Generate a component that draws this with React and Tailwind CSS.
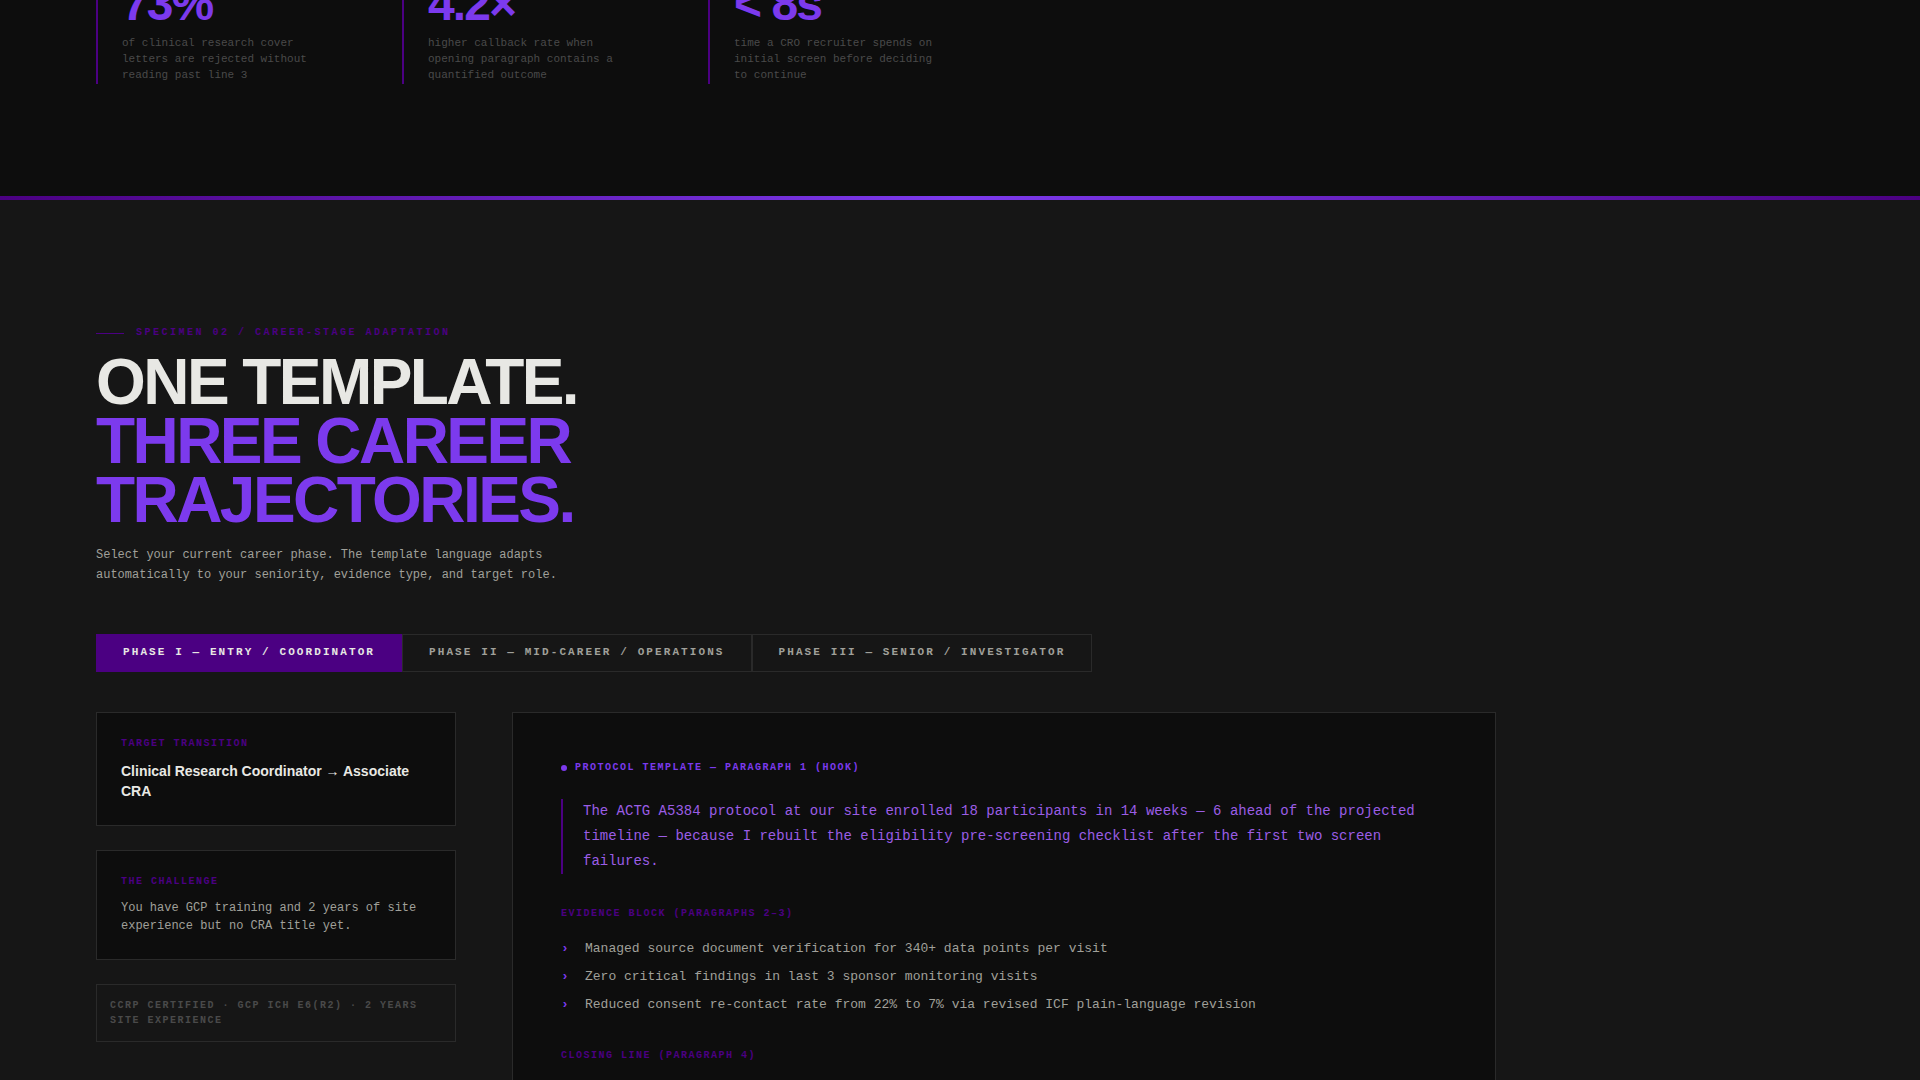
import { useState } from "react";

const stats = [
  { value: "73%", label: "of clinical research cover letters are rejected without reading past line 3" },
  { value: "4.2×", label: "higher callback rate when opening paragraph contains a quantified outcome" },
  { value: "< 8s", label: "time a CRO recruiter spends on initial screen before deciding to continue" },
];

const phases = [
  "PHASE I — ENTRY / COORDINATOR",
  "PHASE II — MID-CAREER / OPERATIONS",
  "PHASE III — SENIOR / INVESTIGATOR",
];

const evidence = [
  "Managed source document verification for 340+ data points per visit",
  "Zero critical findings in last 3 sponsor monitoring visits",
  "Reduced consent re-contact rate from 22% to 7% via revised ICF plain-language revision",
];

function Label({ as: Tag = "h3", className = "", children }) {
  return (
    <Tag className={`text-[10px] leading-[14px] font-bold tracking-[0.15em] ${className}`}>
      {children}
    </Tag>
  );
}

function Stats() {
  return (
    <section className="-mt-5 bg-[#0d0d0d] px-[5%] pb-28">
      <dl className="grid max-w-[854px] grid-cols-3 gap-16">
        {stats.map((s) => (
          <div key={s.value} className="flex flex-col-reverse justify-end border-l-2 border-[#4b0082] pb-px pl-6">
            <dt className="text-[11px] leading-4 text-[#4a4a4a]">{s.label}</dt>
            <dd className="mb-[7px] font-['Liberation_Sans',sans-serif] text-5xl leading-none font-bold tracking-[-0.04em] text-[#7c3aed]">
              {s.value}
            </dd>
          </div>
        ))}
      </dl>
    </section>
  );
}

function PhaseTabs({ active, onSelect }) {
  return (
    <div role="tablist" className="mt-[49px] flex">
      {phases.map((name, i) => (
        <button
          key={name}
          type="button"
          role="tab"
          aria-selected={i === active}
          onClick={() => onSelect(i)}
          className={`border px-[26px] pt-[9px] pb-[11px] text-[11px] leading-4 font-bold tracking-[0.19em] whitespace-nowrap ${
            i === active
              ? "border-[#4b0082] bg-[#4b0082] text-[#e8e8e4]"
              : "border-[#2a2a2a] bg-transparent text-[#a0a09a]"
          }`}
        >
          {name}
        </button>
      ))}
    </div>
  );
}

function Sidebar() {
  return (
    <aside className="flex flex-col gap-6">
      <div className="border border-[#2a2a2a] bg-[#0d0d0d] p-6">
        <Label className="mb-[10px] text-[#4b0082]">TARGET TRANSITION</Label>
        <p className="font-['Liberation_Sans',sans-serif] text-[14px] leading-5 font-bold text-[#e8e8e4]">
          Clinical Research Coordinator → Associate CRA
        </p>
      </div>
      <div className="border border-[#2a2a2a] bg-[#0d0d0d] p-6">
        <Label className="mb-[10px] text-[#4b0082]">THE CHALLENGE</Label>
        <p className="text-[12px] leading-[18px] text-[#a0a09a]">
          You have GCP training and 2 years of site experience but no CRA title yet.
        </p>
      </div>
      <p className="border border-[#2a2a2a] p-[13px] text-[10px] leading-[15px] font-bold tracking-[0.15em] text-[#4a4a4a]">
        CCRP CERTIFIED · GCP ICH E6(R2) · 2 YEARS SITE EXPERIENCE
      </p>
    </aside>
  );
}

function Template() {
  return (
    <article className="border border-[#2a2a2a] bg-[#0d0d0d] p-12">
      <div className="mb-6 flex items-center gap-2 text-[#7c3aed]">
        <span className="size-[6px] rounded-full bg-[#7c3aed]" />
        <Label>PROTOCOL TEMPLATE — PARAGRAPH 1 (HOOK)</Label>
      </div>
      <blockquote className="mb-[33px] border-l-2 border-[#4b0082] pl-5 text-[14px] leading-[25px] text-[#9b5de5]">
        The ACTG A5384 protocol at our site enrolled 18 participants in 14 weeks — 6 ahead of the projected
        timeline — because I rebuilt the eligibility pre-screening checklist after the first two screen failures.
      </blockquote>
      <Label className="mb-[18px] text-[#4b0082]">EVIDENCE BLOCK (PARAGRAPHS 2–3)</Label>
      <ul className="mb-[34px] flex flex-col gap-2 text-[13px] leading-5 text-[#a0a09a]">
        {evidence.map((line) => (
          <li key={line} className="flex gap-4">
            <span aria-hidden="true" className="w-2 font-bold text-[#7c3aed]">›</span>
            {line}
          </li>
        ))}
      </ul>
      <Label className="text-[#4b0082]">CLOSING LINE (PARAGRAPH 4)</Label>
    </article>
  );
}

export default function App() {
  const [active, setActive] = useState(0);
  return (
    <main className="flex h-screen flex-col overflow-hidden bg-[#161616] font-['Liberation_Mono',monospace]">
      <Stats />
      <div className="h-1 shrink-0 bg-linear-[90deg,#4b0082,#7c3aed,#4b0082]" />
      <section className="px-[5%] pt-[127px]">
        <div className="max-w-[1400px]">
          <div className="mb-[14px] flex items-center gap-3 text-[#4b0082]">
            <span className="h-px w-7 bg-[#4b0082]" />
            <p className="text-[10px] leading-[12px] font-bold tracking-[0.25em]">
              SPECIMEN 02 / CAREER-STAGE ADAPTATION
            </p>
          </div>
          <h2 className="font-['Liberation_Sans',sans-serif] text-[64px] leading-[59px] font-bold tracking-[-0.04em] text-[#e8e8e4]">
            ONE TEMPLATE.
            <span className="block text-[#7c3aed]">
              THREE CAREER
              <br />
              TRAJECTORIES.
            </span>
          </h2>
          <p className="mt-[15px] max-w-[480px] text-[12px] leading-5 text-[#a0a09a]">
            Select your current career phase. The template language adapts automatically to your seniority,
            evidence type, and target role.
          </p>
          <PhaseTabs active={active} onSelect={setActive} />
          <div className="mt-10 grid grid-cols-[360px_1fr] items-start gap-14">
            <Sidebar />
            <Template />
          </div>
        </div>
      </section>
    </main>
  );
}
